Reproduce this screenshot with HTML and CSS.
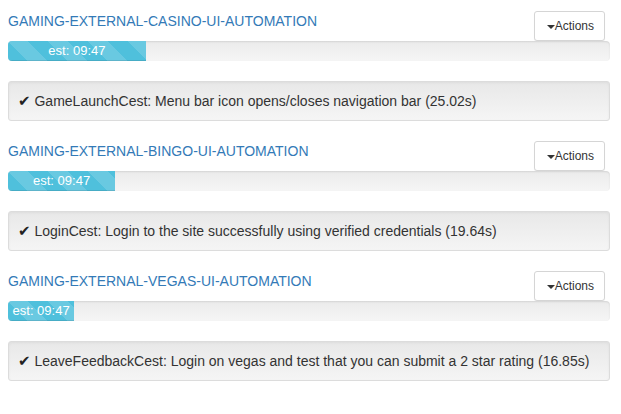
FILE: index.html
```html
<!DOCTYPE html>
<html>
<head>
<meta charset="utf-8">
<link rel="stylesheet" href="styles.css">
</head>
<body>
<div class="page">
  <section class="job">
    <div class="job-head">
      <a class="job-title" href="#">GAMING-EXTERNAL-CASINO-UI-AUTOMATION</a>
      <button class="btn-actions"><span class="caret"></span>Actions</button>
    </div>
    <div class="progress"><div class="progress-bar" style="width:22.9%">est: 09:47</div></div>
    <div class="well"><span class="tick">✔</span> GameLaunchCest: Menu bar icon opens/closes navigation bar (25.02s)</div>
  </section>
  <section class="job">
    <div class="job-head">
      <a class="job-title" href="#">GAMING-EXTERNAL-BINGO-UI-AUTOMATION</a>
      <button class="btn-actions"><span class="caret"></span>Actions</button>
    </div>
    <div class="progress"><div class="progress-bar" style="width:17.8%">est: 09:47</div></div>
    <div class="well"><span class="tick">✔</span> LoginCest: Login to the site successfully using verified credentials (19.64s)</div>
  </section>
  <section class="job">
    <div class="job-head">
      <a class="job-title" href="#">GAMING-EXTERNAL-VEGAS-UI-AUTOMATION</a>
      <button class="btn-actions"><span class="caret"></span>Actions</button>
    </div>
    <div class="progress"><div class="progress-bar" style="width:11%">est: 09:47</div></div>
    <div class="well"><span class="tick">✔</span> LeaveFeedbackCest: Login on vegas and test that you can submit a 2 star rating (16.85s)</div>
  </section>
</div>
</body>
</html>
```
FILE: styles.css
```css
html, body {
  margin: 0;
  padding: 0;
  background: #fff;
}
body {
  font-family: "Liberation Sans", Arial, "DejaVu Sans", sans-serif;
  font-size: 14px;
  line-height: 20px;
  color: #333;
}
.page {
  width: 602px;
  padding: 10px 0 0 8px;
}
.job {
  display: flex;
  flex-direction: column;
}
.job-head {
  display: flex;
  justify-content: space-between;
  align-items: flex-start;
}
.job-title {
  margin-top: 1px;
  color: #337ab7;
  text-decoration: none;
  font-size: 14px;
  line-height: 20px;
}
.btn-actions {
  margin-top: 1px;
  margin-right: 5px;
  height: 30px;
  padding: 5px 10px;
  font-family: inherit;
  font-size: 12px;
  line-height: 18px;
  color: #333;
  background: #fff;
  border: 1px solid #d5d5d5;
  border-radius: 3px;
  box-shadow: 0 1px 1px rgba(0,0,0,0.05);
  display: flex;
  align-items: center;
}
.caret {
  display: inline-block;
  width: 0;
  height: 0;
  margin-left: 2px;
  margin-top: 1px;
  border-top: 4px solid #333;
  border-left: 4px solid transparent;
  border-right: 4px solid transparent;
}
.progress {
  height: 20px;
  margin-bottom: 20px;
  border-radius: 4px;
  overflow: hidden;
  background-color: #f5f5f5;
  background-image: linear-gradient(to bottom, #ebebeb 0, #f5f5f5 100%);
  box-shadow: inset 0 1px 2px rgba(0,0,0,0.1);
}
.progress-bar {
  height: 20px;
  font-size: 13px;
  line-height: 20px;
  color: #fff;
  text-align: center;
  white-space: nowrap;
  background-color: #4fc0dc;
  background-image:
    linear-gradient(45deg, rgba(255,255,255,.15) 25%, transparent 25%, transparent 50%, rgba(255,255,255,.15) 50%, rgba(255,255,255,.15) 75%, transparent 75%, transparent);
  background-size: 40px 40px;
  box-shadow: inset 0 -1px 0 rgba(0,0,0,0.1);
}
.well {
  padding: 9px;
  margin-bottom: 19px;
  border: 1px solid #dcdcdc;
  border-radius: 3px;
  background-color: #f5f5f5;
  background-image: linear-gradient(to bottom, #e8e8e8 0, #f5f5f5 100%);
  box-shadow: inset 0 1px 3px rgba(0,0,0,.05), 0 1px 0 rgba(255,255,255,.1);
  font-size: 14px;
  line-height: 20px;
}
.tick {
  color: #222;
  font-size: 15px;
}
```
